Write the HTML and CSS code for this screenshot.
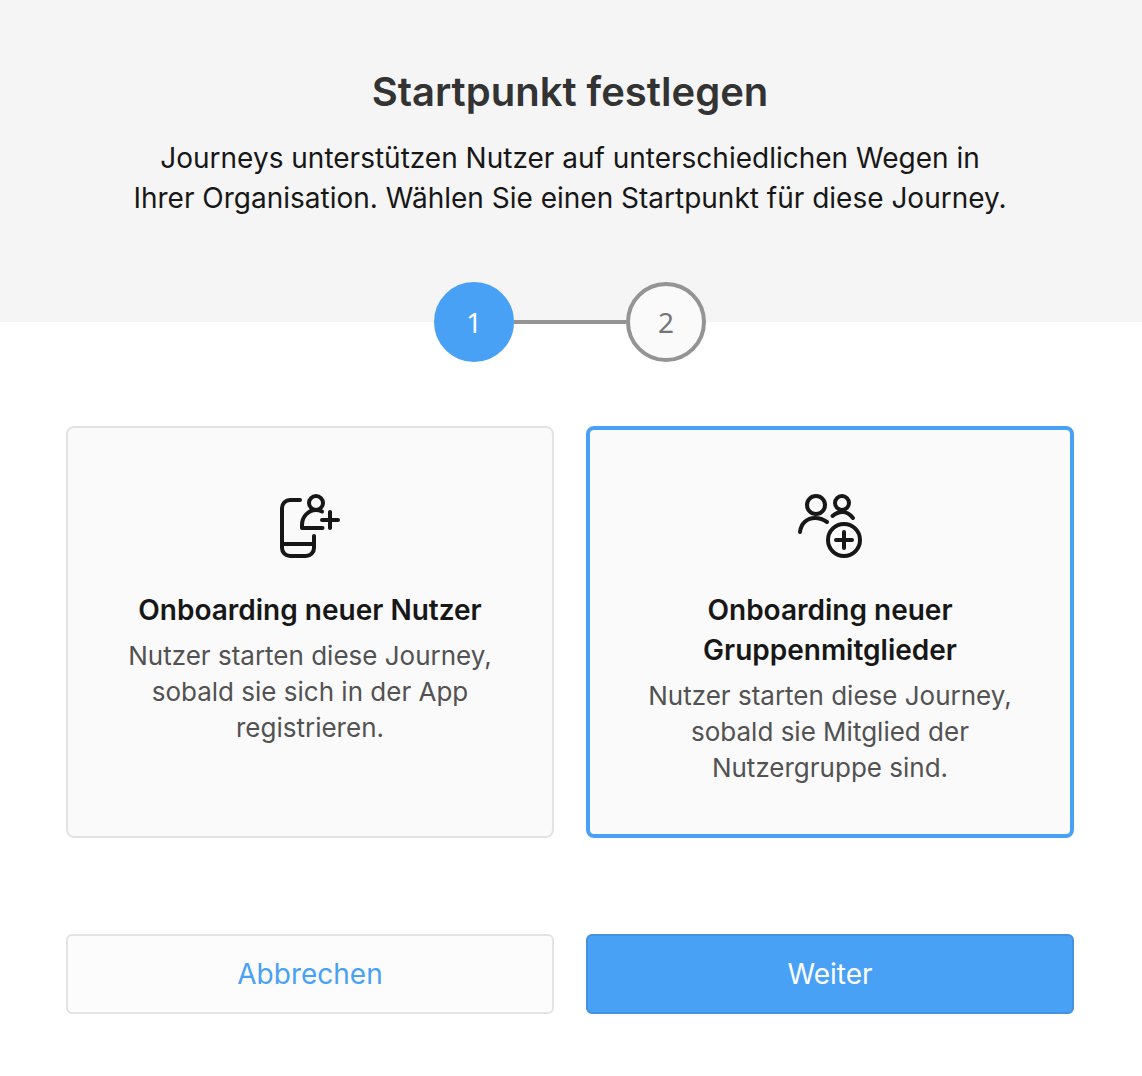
FILE: index.html
```html
<!DOCTYPE html>
<html lang="de">
<head>
    <meta charset="UTF-8">
    <meta name="viewport" content="width=device-width, initial-scale=1.0">
    <title>Startpunkt festlegen</title>
    <link rel="stylesheet" href="styles.css">
</head>
<body>

    <header class="header">
        <h1>Startpunkt festlegen</h1>
        <p class="intro">Journeys unterstützen Nutzer auf unterschiedlichen Wegen in Ihrer Organisation. Wählen Sie einen Startpunkt für diese Journey.</p>
    </header>

    <ol class="steps">
        <li class="step active" aria-current="step">1</li>
        <li class="line" aria-hidden="true"></li>
        <li class="step">2</li>
    </ol>

    <form class="content">
        <div class="cards" role="radiogroup" aria-label="Startpunkt">
            <label class="card">
                <input type="radio" name="start" value="user">
                <svg class="icon" viewBox="0 0 64 64" aria-hidden="true">
                    <path d="M22 6H12a8 8 0 0 0-8 8v40a8 8 0 0 0 8 8h16a8 8 0 0 0 8-8V42M4 50h32"/>
                    <circle cx="38" cy="9" r="7"/>
                    <path d="M44 17.500c-2-1-4-1.500-6-1.500-8 0-14 7-14 15v3h20.500M52 18v16M44 26h16"/>
                </svg>
                <span class="card-title">Onboarding neuer Nutzer</span>
                <span class="card-text">Nutzer starten diese Journey, sobald sie sich in der App registrieren.</span>
            </label>
            <label class="card">
                <input type="radio" name="start" value="group" checked>
                <svg class="icon" viewBox="0 0 64 64" aria-hidden="true">
                    <circle cx="18" cy="11" r="9"/>
                    <circle cx="44" cy="9" r="7"/>
                    <path d="M2 38c1-8.500 7-14 15-14 5 0 8.500 1.500 12 4M34.500 22c3-2.600 6-4 10-4 4.500 0 7.500 2.200 10.500 6"/>
                    <circle cx="46" cy="46" r="16"/>
                    <path d="M46 38v16M38 46h16"/>
                </svg>
                <span class="card-title">Onboarding neuer Gruppenmitglieder</span>
                <span class="card-text">Nutzer starten diese Journey, sobald sie Mitglied der Nutzergruppe sind.</span>
            </label>
        </div>

        <div class="actions">
            <button type="button" class="btn">Abbrechen</button>
            <button type="submit" class="btn primary">Weiter</button>
        </div>
    </form>

</body>
</html>
```
FILE: styles.css
```css
* {
    box-sizing: border-box;
}

body {
    margin: 0;
    font-family: Inter, 'Liberation Sans', sans-serif;
    font-size: 28px;
    line-height: 40px;
    color: #171717;
    background-color: #ffffff;
}

.header {
    padding: 64px 68px 104px 66px;
    background-color: #f5f5f5;
    text-align: center;
}

h1 {
    margin: 0 0 18px;
    font-size: 40px;
    line-height: 56px;
    font-weight: 600;
    color: #333333;
}

.intro {
    max-width: 880px;
    margin: 0 auto;
}

/* stepper sits half over the header */
.steps {
    display: flex;
    align-items: center;
    justify-content: center;
    margin: -40px 0 64px;
    padding: 0 68px 0 66px;
    list-style: none;
}

.step {
    display: flex;
    align-items: center;
    justify-content: center;
    width: 80px;
    height: 80px;
    border: 4px solid #949494;
    border-radius: 50%;
    background-color: #fafafa;
    font-family: 'Noto Sans', sans-serif;
    color: #757575;
}

.step.active {
    border-color: #49a1f6;
    background-color: #49a1f6;
    color: #ffffff;
}

.line {
    width: 112px;
    height: 4px;
    background-color: #949494;
}

.content {
    padding: 0 68px 62px 66px;
}

.cards,
.actions {
    display: grid;
    grid-template-columns: 1fr 1fr;
    gap: 32px;
}

.card {
    position: relative;
    display: flex;
    flex-direction: column;
    align-items: center;
    padding: 66px 56px 50px;
    border: 2px solid #e3e3e3;
    border-radius: 8px;
    background-color: #fafafa;
    text-align: center;
    cursor: pointer;
}

.card:has(input:checked) {
    padding: 64px 54px 48px;
    border: 4px solid #49a1f6;
}

.card input {
    position: absolute;
    margin: 0;
    opacity: 0;
}

.icon {
    width: 64px;
    height: 64px;
    margin-bottom: 32px;
    overflow: visible;
    fill: none;
    stroke: #171717;
    stroke-width: 4;
    stroke-linecap: round;
    stroke-linejoin: round;
}

.card-title {
    margin-bottom: 8px;
    font-weight: 600;
}

.card-text {
    font-size: 26px;
    line-height: 36px;
    color: #525252;
}

.actions {
    margin-top: 96px;
}

.btn {
    height: 80px;
    border: 2px solid #e3e3e3;
    border-radius: 6px;
    background-color: #fcfcfc;
    font: inherit;
    color: #49a1f6;
    cursor: pointer;
}

.btn.primary {
    border-color: #4391df;
    background-color: #49a1f6;
    color: #ffffff;
}
```
